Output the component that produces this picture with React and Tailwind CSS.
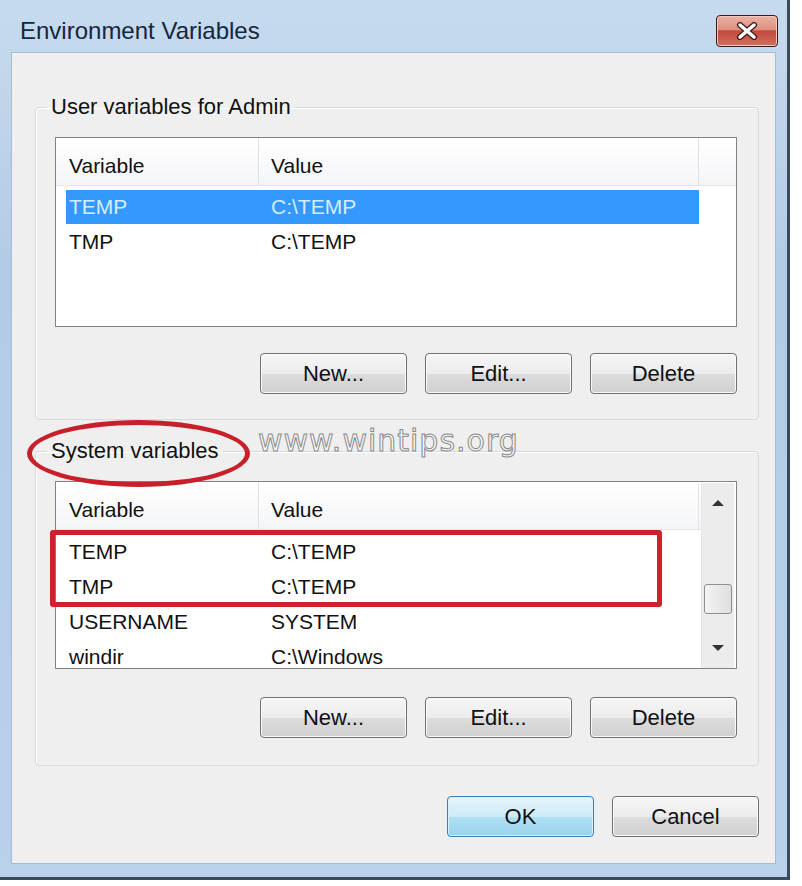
import React from "react";

const font = { fontFamily: '"Liberation Sans", Arial, sans-serif' };

function Btn({ children, primary }) {
  return (
    <button
      className={
        primary
          ? "h-[41px] w-[147px] rounded-[4px] border border-[#3c7fb1] bg-[linear-gradient(#e3f4fb_0%,#cdebf7_50%,#b0e0f2_51%,#98d4ec_100%)] text-[22px] text-[#111] shadow-[inset_0_0_0_1px_#d9f0fa]"
          : "h-[41px] w-[147px] rounded-[4px] border border-[#707070] bg-[linear-gradient(#f6f6f6_0%,#ececec_50%,#dcdcdc_51%,#d0d0d0_100%)] text-[22px] text-[#111] shadow-[inset_0_0_0_1px_#fbfbfb]"
      }
    >
      {children}
    </button>
  );
}

function Header() {
  return (
    <div className="flex h-[47px] border-b border-[#e2e3e5] bg-[linear-gradient(#ffffff,#f4f5f7)]">
      <div className="flex w-[203px] items-center border-r border-[#dfe1e4] pl-[13px] pt-[7px]">Variable</div>
      <div className="flex w-[440px] items-center border-r border-[#dfe1e4] pl-[12px] pt-[7px]">Value</div>
    </div>
  );
}

function Row({ name, value, selected }) {
  return (
    <div
      className={
        selected
          ? "ml-[10px] flex h-[34px] w-[633px] items-center bg-[#3399ff] text-[#d6ecff]"
          : "flex h-[35px] items-center"
      }
    >
      <div className={selected ? "w-[193px] pl-[3px]" : "w-[203px] pl-[13px]"}>{name}</div>
      <div className="pl-[12px]">{value}</div>
    </div>
  );
}

function Group({ title, children, className }) {
  return (
    <fieldset className={"rounded-[4px] border border-[#d3dbe1] shadow-[inset_1px_1px_0_#ffffff] " + className}>
      <legend className="ml-[-8px] px-[4px] text-[22px] leading-[26px] text-[#111]">{title}</legend>
      {children}
    </fieldset>
  );
}

export default function App() {
  return (
    <div className="relative h-[886px] w-[802px] bg-white" style={font}>
      <div className="flex h-[880px] w-[790px] flex-col border-r-[3px] border-b-[3px] border-[#394b5c] bg-[linear-gradient(#c6dbee,#b3cce5_30%,#b9d1ea)]">
        <div className="flex h-[52px] items-center justify-between pl-[20px] pr-[9px] pt-[10px]">
          <span className="text-[24px] text-[#15263d]">Environment Variables</span>
          <div className="flex h-[32px] w-[62px] items-center justify-center rounded-[4px] border border-[#3d1a1a] bg-[linear-gradient(#eab1a4_0%,#de8f80_45%,#c34a3c_50%,#d0705f_100%)] shadow-[inset_0_0_0_1px_#f3c8bd]">
            <svg width="22" height="18" viewBox="0 0 22 18">
              <path d="M4 3 L18 15 M18 3 L4 15" stroke="#3a1a1a" strokeWidth="6" strokeLinecap="round" />
              <path d="M4 3 L18 15 M18 3 L4 15" stroke="#ffffff" strokeWidth="3.5" strokeLinecap="round" />
            </svg>
          </div>
        </div>
        <div className="mx-[11px] mb-[13px] flex flex-1 flex-col border border-[#a5bdd4] bg-[#efefef] text-[21px] text-[#111]">
          <Group title="User variables for Admin" className="ml-[23px] mt-[41px] w-[724px] px-[19px] pt-[17px] pb-[25px]">
            <div className="h-[190px] w-[682px] border border-[#7c8288] bg-white pt-[1px]">
              <Header />
              <div className="pt-[4px]">
                <Row name="TEMP" value="C:\TEMP" selected />
                <Row name="TMP" value="C:\TEMP" />
              </div>
            </div>
            <div className="mt-[26px] flex justify-end gap-[18px] pr-[2px]">
              <Btn>New...</Btn>
              <Btn>Edit...</Btn>
              <Btn>Delete</Btn>
            </div>
          </Group>
          <Group title="System variables" className="ml-[23px] mt-[18px] w-[724px] px-[19px] pt-[17px] pb-[27px]">
            <div className="flex h-[188px] w-[682px] border border-[#7c8288] bg-white pt-[1px]">
              <div className="w-[645px] overflow-hidden">
                <Header />
                <div className="pt-[4px]">
                  <Row name="TEMP" value="C:\TEMP" />
                  <Row name="TMP" value="C:\TEMP" />
                  <Row name="USERNAME" value="SYSTEM" />
                  <Row name="windir" value="C:\Windows" />
                </div>
              </div>
              <div className="flex w-[33px] flex-col items-center justify-between border-l border-[#e6e6e6] bg-[#ececec] py-[16px]">
                <svg width="14" height="8" viewBox="0 0 14 8"><path d="M1 7 L7 1 L13 7 Z" fill="#333" /></svg>
                <div className="mt-[77px] h-[30px] w-[28px] rounded-[3px] border border-[#8f8f8f] bg-[linear-gradient(90deg,#f4f4f4,#dedede)]" />
                <div className="flex-1" />
                <svg width="14" height="8" viewBox="0 0 14 8"><path d="M1 1 L13 1 L7 7 Z" fill="#333" /></svg>
              </div>
            </div>
            <div className="mt-[28px] flex justify-end gap-[18px] pr-[2px]">
              <Btn>New...</Btn>
              <Btn>Edit...</Btn>
              <Btn>Delete</Btn>
            </div>
          </Group>
          <div className="mt-[30px] flex justify-end gap-[18px] pr-[16px]">
            <Btn primary>OK</Btn>
            <Btn>Cancel</Btn>
          </div>
        </div>
      </div>

      <span
        className="absolute left-[258px] top-[418px] text-[30px] tracking-[1px] text-[#f7f7f7] [-webkit-text-stroke:1px_#8a8a8a]"
        style={{ fontFamily: '"DejaVu Sans", sans-serif' }}
      >
        www.wintips.org
      </span>
      <div className="absolute left-[27px] top-[420px] h-[67px] w-[223px] rounded-[50%] border-[5px] border-[#c8202b]" />
      <div className="absolute left-[50px] top-[530px] h-[77px] w-[612px] rounded-[3px] border-[5px] border-[#d0202b]" />
    </div>
  );
}
